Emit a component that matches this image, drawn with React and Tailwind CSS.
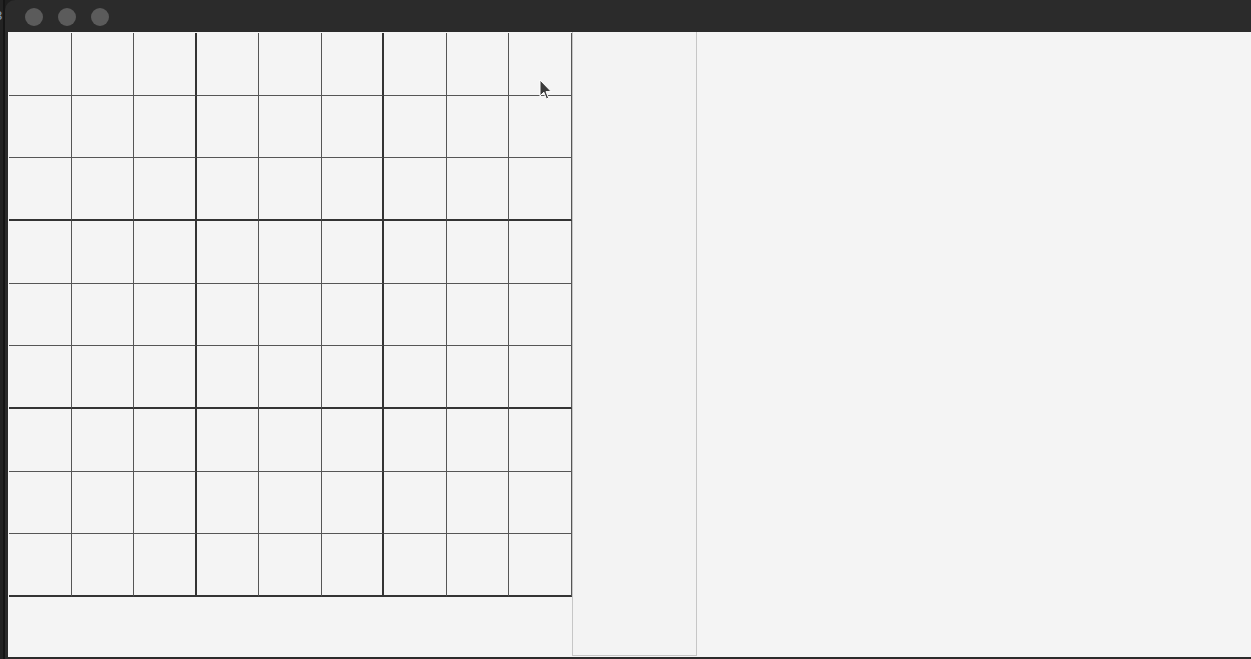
import React from 'react';

const cells = Array.from({ length: 81 }, (_, i) => i);

const cellClass = (i) => {
  const row = Math.floor(i / 9);
  const col = i % 9;
  const right = col === 8 ? 'border-r border-r-[#555555]' : col % 3 === 2 ? 'border-r-2 border-r-[#333333]' : 'border-r border-r-[#555555]';
  const bottom = row % 3 === 2 ? 'border-b-2 border-b-[#333333]' : 'border-b border-b-[#555555]';
  return `${right} ${bottom} bg-[#f4f4f4]`;
};

const Cursor = () => (
  <svg className="absolute left-[534px] top-[79px] z-10" width="15" height="23" viewBox="0 0 15 23">
    <path d="M1 1 L1 17 L4.8 13.2 L7.4 20 L9.6 19 L7 12.6 L12.2 12.6 Z" fill="#3a3a3a" stroke="#ffffff" strokeWidth="1" />
  </svg>
);

const App = () => {
  return (
    <div className="w-[1251px] h-[659px] bg-[#1e1e1e] flex overflow-hidden" style={{ fontFamily: '"Liberation Sans", sans-serif' }}>
      {/* window behind */}
      <div className="w-[3px] bg-[#232323] overflow-hidden pt-[9px]">
        <span className="text-[13px] leading-none text-[#8aa0c0] -ml-[5px] block">3</span>
      </div>
      <div className="w-[2px] bg-[#151515]" />

      {/* window */}
      <div className="flex-1 flex flex-col bg-[#2b2b2b] rounded-tl-[10px] pb-[2px]">
        {/* title bar */}
        <div className="h-[32px] flex items-center gap-[15px] pl-[20px] pt-[2px] relative">
          <div className="w-[18px] h-[18px] rounded-full bg-[#5b5b5b]" />
          <div className="w-[18px] h-[18px] rounded-full bg-[#5b5b5b]" />
          <div className="w-[18px] h-[18px] rounded-full bg-[#5b5b5b]" />
          <Cursor />
        </div>

        {/* content */}
        <div className="flex-1 flex ml-[3px] bg-[#f4f4f4]">
          <div className="w-[564px] flex flex-col">
            <div className="grid grid-cols-9 grid-rows-9 w-[563px] h-[564px] ml-[1px] mt-[1px]">
              {cells.map((i) => (
                <div key={i} className={cellClass(i)} />
              ))}
            </div>
          </div>
          <div className="w-[125px] border-l border-r border-b border-[#c6c6c6] bg-[#f3f3f3] mb-[1px]" />
          <div className="flex-1 bg-[#f4f4f4]" />
        </div>
      </div>
    </div>
  );
};

export default App;
